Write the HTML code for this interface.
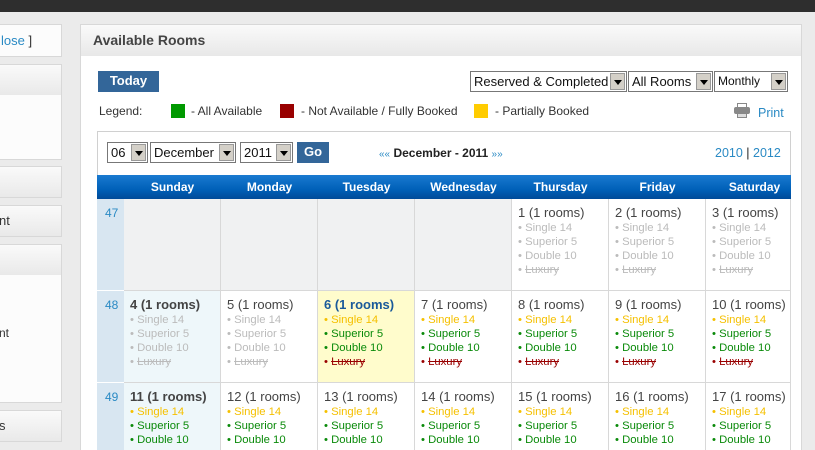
<!DOCTYPE html><html style="overflow:hidden;height:450px"><head><style>
*{margin:0;padding:0;box-sizing:border-box}
html,body{overflow:hidden}
body{width:815px;height:450px;background:#ebebeb;font-family:"Liberation Sans",Arial,sans-serif;position:relative;color:#333}
.a{position:absolute}
.top{left:0;top:0;width:815px;height:12px;background:#2e2e2e}
.sp{position:absolute;left:-2px;width:64px;border:1px solid #d8d8d8;background:#fcfcfc}
.sh{background:linear-gradient(#fafafa,#e9e9e9);height:30px;font-size:13px;line-height:30px;color:#333}
.main{left:80px;top:24px;width:722px;height:426px;background:#fff;border:1px solid #d8d8d8;border-bottom:0}
.mh{height:31px;background:linear-gradient(#fafafa,#e8e8e8);font-weight:bold;font-size:14px;line-height:31px;padding-left:12px;color:#444}
.btn{background:#336699;color:#fff;font-weight:bold;font-size:13px;text-align:center}
.sel{height:21px;border:1px solid #777;background:#fff;font-size:13px;line-height:19px;padding-left:3px;color:#111}
.sel b{position:absolute;right:1px;top:1px;width:15px;height:17px;background:#d4d0c8;border:1px solid #999}
.sel b:after{content:"";position:absolute;left:3px;top:6px;border:4px solid transparent;border-top:5px solid #000}
.leg{font-size:12px;color:#333;top:104px}
.sq{width:14px;height:14px;top:104px}
.tbl{left:97px;top:131px;width:694px;height:319px;border:1px solid #d0d0d0;border-bottom:0;background:#fff}
.hd{left:97px;top:175px;width:694px;height:24px;background:linear-gradient(#1a7ad0,#0060b8 60%,#004a98);}
.hd span{position:absolute;top:5px;color:#fff;font-weight:bold;font-size:12px;text-align:center;width:97px}
.c{position:absolute;border-right:1px solid #d8d8d8;border-bottom:1px solid #d8d8d8;width:97px;height:92px;padding:6px 0 0 6px;font-size:12px;line-height:14px;overflow:hidden}
.c .n{font-size:13px;color:#444;margin-bottom:1px;line-height:15px}
.c div{font-size:11.3px;line-height:14px}
.g{color:#bbb}.y{color:#f5c000}.gr{color:#0a8a0a}
.wk{position:absolute;left:97px;width:27px;height:92px;background:#d8e6f1;border-bottom:1px solid #fff;color:#2a8ac4;font-size:12px;padding:7px 0 0 8px}
.lk{color:#2a8ac4}
.r3{height:67px;border-bottom:0}
</style></head><body>
<div class="a top"></div>
<div class="sp" style="top:24px;height:33px;line-height:31px;font-size:13px;padding-left:2px"><span class="lk">lose</span> <span>]</span></div>
<div class="sp" style="top:64px;height:96px"><div class="sh"></div></div>
<div class="sp" style="top:166px;height:32px"><div class="sh"></div></div>
<div class="sp" style="top:205px;height:32px"><div class="sh">nt</div></div>
<div class="sp" style="top:244px;height:159px"><div class="sh"></div><div style="position:absolute;top:81px;font-size:12px">nt</div></div>
<div class="sp" style="top:410px;height:32px"><div class="sh">s</div></div>
<div class="a main"><div class="mh">Available Rooms</div></div>
<div class="a btn" style="left:98px;top:71px;width:61px;height:21px;line-height:20px">Today</div>
<div class="a sel" style="left:470px;top:71px;width:157px">Reserved &amp; Completed<b></b></div>
<div class="a sel" style="left:628px;top:71px;width:85px">All Rooms<b></b></div>
<div class="a sel" style="left:714px;top:71px;width:74px;font-size:12px">Monthly<b></b></div>
<div class="a leg" style="left:99px">Legend:</div>
<div class="a sq" style="left:171px;background:#009900"></div><div class="a leg" style="left:191px">- All Available</div>
<div class="a sq" style="left:280px;background:#990000"></div><div class="a leg" style="left:301px">- Not Available / Fully Booked</div>
<div class="a sq" style="left:474px;background:#ffcc00"></div><div class="a leg" style="left:495px">- Partially Booked</div>
<div class="a" style="left:737px;top:103px;width:10px;height:5px;background:#fff;border:1px solid #888"></div>
<div class="a" style="left:734px;top:107px;width:16px;height:7px;background:#888;border-radius:2px"></div>
<div class="a" style="left:737px;top:113px;width:10px;height:5px;background:#ddd;border:1px solid #888"></div>
<div class="a lk" style="left:758px;top:106px;font-size:12.5px">Print</div>
<div class="a tbl"></div>
<div class="a sel" style="left:107px;top:142px;width:41px">06<b></b></div>
<div class="a sel" style="left:150px;top:142px;width:86px">December<b></b></div>
<div class="a sel" style="left:240px;top:142px;width:53px">2011<b></b></div>
<div class="a btn" style="left:297px;top:142px;width:32px;height:21px;line-height:20px">Go</div>
<div class="a" style="left:379px;top:146px;font-size:12px;font-weight:bold;color:#222"><span class="lk" style="font-weight:normal;font-size:10px">««</span> December - 2011 <span class="lk" style="font-weight:normal;font-size:10px">»»</span></div>
<div class="a" style="left:715px;top:146px;font-size:12.5px;color:#222"><span class="lk">2010</span> | <span class="lk">2012</span></div>
<div class="a hd"><span style="left:27px">Sunday</span><span style="left:124px">Monday</span><span style="left:221px">Tuesday</span><span style="left:318px">Wednesday</span><span style="left:415px">Thursday</span><span style="left:512px">Friday</span><span style="left:609px">Saturday</span></div>
<div class="wk" style="top:199px">47</div><div class="wk" style="top:291px">48</div><div class="wk r3" style="top:383px">49</div>
<div class="c" style="left:124px;top:199px;background:#f0f1f2"></div>
<div class="c" style="left:221px;top:199px;background:#f0f1f2"></div>
<div class="c" style="left:318px;top:199px;background:#f0f1f2"></div>
<div class="c" style="left:415px;top:199px;background:#f0f1f2"></div>
<div class="c" style="left:512px;top:199px"><p class="n">1 (1 rooms)</p><div class="g">• Single 14</div><div class="g">• Superior 5</div><div class="g">• Double 10</div><div class="g">• <s>Luxury</s></div></div>
<div class="c" style="left:609px;top:199px"><p class="n">2 (1 rooms)</p><div class="g">• Single 14</div><div class="g">• Superior 5</div><div class="g">• Double 10</div><div class="g">• <s>Luxury</s></div></div>
<div class="c" style="left:706px;top:199px;width:85px"><p class="n">3 (1 rooms)</p><div class="g">• Single 14</div><div class="g">• Superior 5</div><div class="g">• Double 10</div><div class="g">• <s>Luxury</s></div></div>
<div class="c" style="left:124px;top:291px;background:#eef7fa"><p class="n"><b>4 (1 rooms)</b></p><div class="g">• Single 14</div><div class="g">• Superior 5</div><div class="g">• Double 10</div><div class="g">• <s>Luxury</s></div></div>
<div class="c" style="left:221px;top:291px"><p class="n">5 (1 rooms)</p><div class="g">• Single 14</div><div class="g">• Superior 5</div><div class="g">• Double 10</div><div class="g">• <s>Luxury</s></div></div>
<div class="c" style="left:318px;top:291px;background:#fffccc"><p class="n" style="color:#1a5a9a"><b>6 (1 rooms)</b></p><div class="y">• Single 14</div><div class="gr">• Superior 5</div><div class="gr">• Double 10</div><div style="color:#900">• <s>Luxury</s></div></div>
<div class="c" style="left:415px;top:291px"><p class="n">7 (1 rooms)</p><div class="y">• Single 14</div><div class="gr">• Superior 5</div><div class="gr">• Double 10</div><div style="color:#900">• <s>Luxury</s></div></div>
<div class="c" style="left:512px;top:291px"><p class="n">8 (1 rooms)</p><div class="y">• Single 14</div><div class="gr">• Superior 5</div><div class="gr">• Double 10</div><div style="color:#900">• <s>Luxury</s></div></div>
<div class="c" style="left:609px;top:291px"><p class="n">9 (1 rooms)</p><div class="y">• Single 14</div><div class="gr">• Superior 5</div><div class="gr">• Double 10</div><div style="color:#900">• <s>Luxury</s></div></div>
<div class="c" style="left:706px;top:291px;width:85px"><p class="n">10 (1 rooms)</p><div class="y">• Single 14</div><div class="gr">• Superior 5</div><div class="gr">• Double 10</div><div style="color:#900">• <s>Luxury</s></div></div>
<div class="c r3" style="left:124px;top:383px;background:#eef7fa"><p class="n"><b>11 (1 rooms)</b></p><div class="y">• Single 14</div><div class="gr">• Superior 5</div><div class="gr">• Double 10</div></div>
<div class="c r3" style="left:221px;top:383px"><p class="n">12 (1 rooms)</p><div class="y">• Single 14</div><div class="gr">• Superior 5</div><div class="gr">• Double 10</div></div>
<div class="c r3" style="left:318px;top:383px"><p class="n">13 (1 rooms)</p><div class="y">• Single 14</div><div class="gr">• Superior 5</div><div class="gr">• Double 10</div></div>
<div class="c r3" style="left:415px;top:383px"><p class="n">14 (1 rooms)</p><div class="y">• Single 14</div><div class="gr">• Superior 5</div><div class="gr">• Double 10</div></div>
<div class="c r3" style="left:512px;top:383px"><p class="n">15 (1 rooms)</p><div class="y">• Single 14</div><div class="gr">• Superior 5</div><div class="gr">• Double 10</div></div>
<div class="c r3" style="left:609px;top:383px"><p class="n">16 (1 rooms)</p><div class="y">• Single 14</div><div class="gr">• Superior 5</div><div class="gr">• Double 10</div></div>
<div class="c r3" style="left:706px;top:383px;width:85px"><p class="n">17 (1 rooms)</p><div class="y">• Single 14</div><div class="gr">• Superior 5</div><div class="gr">• Double 10</div></div>
</body></html>
